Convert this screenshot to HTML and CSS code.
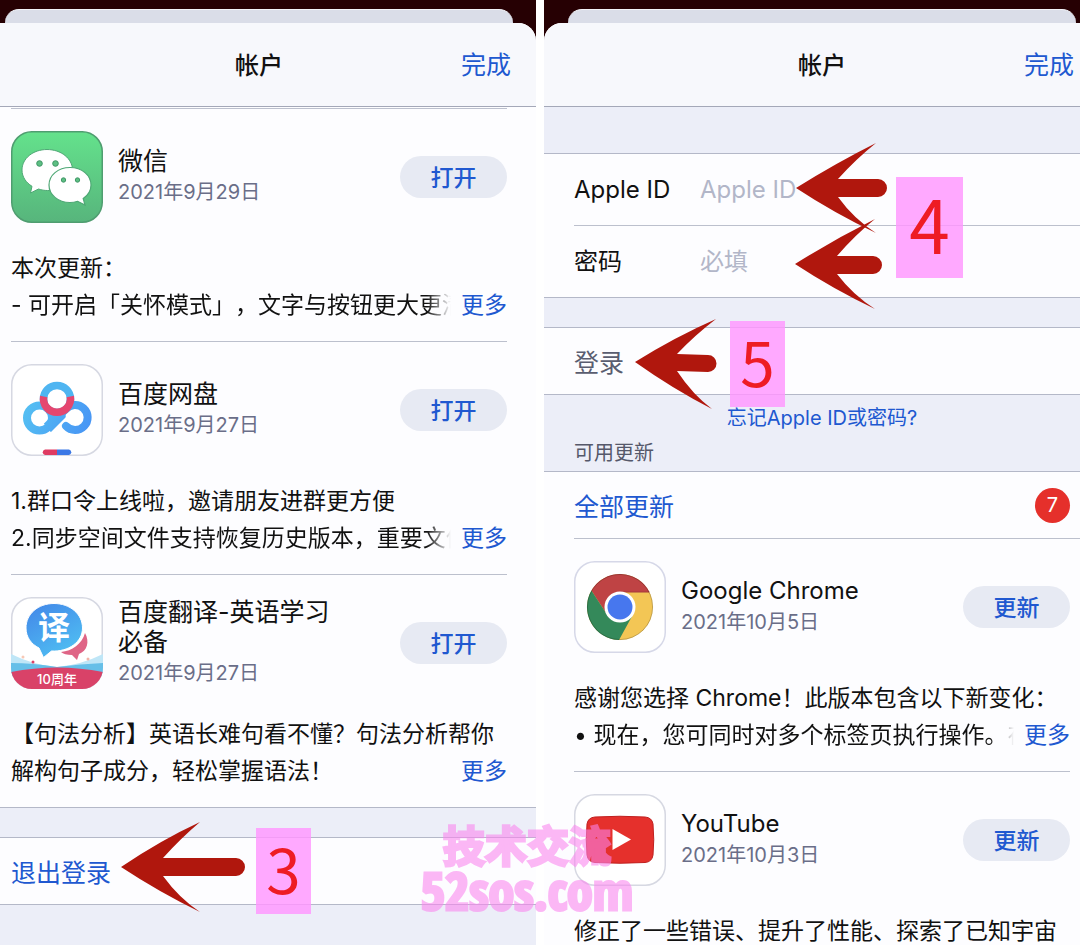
FILE: index.html
```html
<!DOCTYPE html>
<html lang="zh-CN">
<head>
    <meta charset="UTF-8">
    <meta name="viewport" content="width=device-width, initial-scale=1.0">
    <title>帐户</title>
    <link rel="stylesheet" href="styles.css">
</head>
<body>
    <main class="steps">
        <section class="phone phone-left">
            <div class="back-sheet"></div>
            <div class="sheet">
                <header class="sheet-header">
                    <h1>帐户</h1>
                    <a class="done" href="#">完成</a>
                </header>

                <div class="app-list">
                    <article class="app">
                        <div class="app-top">
                            <svg class="app-icon" viewBox="0 0 92 92" aria-hidden="true">
                                <defs>
                                    <linearGradient id="wechatBg" x1="0" y1="0" x2="0" y2="1">
                                        <stop offset="0" stop-color="#64e28c"/>
                                        <stop offset="1" stop-color="#57b57c"/>
                                    </linearGradient>
                                </defs>
                                <rect x=".75" y=".75" width="90.5" height="90.5" rx="20" fill="url(#wechatBg)" stroke="#4f9d70" stroke-width="1.5"/>
                                <path d="M36 18.500c-14 0-25 9-25 20.500 0 7 4 12.500 10 16.300L19.500 62l8-4c3 1 6 1.500 9 1.500 14 0 25-9 25-20.500S50 18.500 36 18.500z" fill="#fff" stroke="#4fa875" stroke-width="1"/>
                                <path d="M59 36.500c-12 0-21 7.800-21 17.500s9 17.500 21 17.500c2.800 0 5.200-.4 7.600-1.200L74 74l-1.800-6.500c4.800-3.200 7.800-8 7.800-13.500 0-9.700-9-17.500-21-17.500z" fill="#fff" stroke="#4fa875" stroke-width="1.200"/>
                                <g fill="#5dbf83" stroke="#3f9665" stroke-width="1">
                                    <circle cx="28.500" cy="32.500" r="2.800"/>
                                    <circle cx="44.500" cy="32.500" r="2.800"/>
                                    <circle cx="52.500" cy="49" r="2.200"/>
                                    <circle cx="66.500" cy="49" r="2.200"/>
                                </g>
                            </svg>
                            <div class="app-info">
                                <h2>微信</h2>
                                <p>2021年9月29日</p>
                            </div>
                            <button class="pill" type="button">打开</button>
                        </div>
                        <div class="notes">
                            <p>本次更新：</p>
                            <div class="notes-last">
                                <p class="fade">- 可开启「关怀模式」，文字与按钮更大更清</p>
                                <a href="#">更多</a>
                            </div>
                        </div>
                    </article>

                    <article class="app">
                        <div class="app-top">
                            <svg class="app-icon" viewBox="0 0 92 92" aria-hidden="true">
                                <defs>
                                    <linearGradient id="panBlue" gradientUnits="userSpaceOnUse" x1="12" y1="40" x2="80" y2="70">
                                        <stop offset="0" stop-color="#55c1f2"/>
                                        <stop offset="1" stop-color="#4793f5"/>
                                    </linearGradient>
                                </defs>
                                <rect x=".75" y=".75" width="90.500" height="90.500" rx="20" fill="#fff" stroke="#d6d8e2" stroke-width="1.500"/>
                                <path d="M28 38L46 52 64 38 58 50 40 68 34 64 43 54z" fill="url(#panBlue)"/>
                                <g fill="none" stroke="url(#panBlue)" stroke-width="8" stroke-linecap="round">
                                    <circle cx="28.500" cy="54" r="12.500" fill="#fff"/>
                                    <path d="M54.500 45.500A12.500 12.500 0 1 1 55 62" fill="#fff"/>
                                </g>
                                <path d="M36 63L55 44" stroke="url(#panBlue)" stroke-width="9"/>
                                <circle cx="46" cy="35" r="13.500" fill="#fff" stroke="#4fb5f1" stroke-width="7.500"/>
                                <path d="M32.700 32.500a13.500 13.500 0 1 0 26.600 0" fill="none" stroke="#e5466f" stroke-width="7.500"/>
                                <path d="M46 85.500H34a2.800 2.800 0 0 0 0 5.500h12z" fill="#df3b62"/>
                                <path d="M46 85.500h12a2.800 2.800 0 0 1 0 5.500H46z" fill="#3b78e6"/>
                            </svg>
                            <div class="app-info">
                                <h2>百度网盘</h2>
                                <p>2021年9月27日</p>
                            </div>
                            <button class="pill" type="button">打开</button>
                        </div>
                        <div class="notes">
                            <p>1.群口令上线啦，邀请朋友进群更方便</p>
                            <div class="notes-last">
                                <p class="fade">2.同步空间文件支持恢复历史版本，重要文件</p>
                                <a href="#">更多</a>
                            </div>
                        </div>
                    </article>

                    <article class="app">
                        <div class="app-top">
                            <svg class="app-icon" viewBox="0 0 92 92" aria-hidden="true">
                                <defs>
                                    <linearGradient id="fanyiBlue" x1="0" y1="0" x2=".6" y2="1">
                                        <stop offset="0" stop-color="#4285e8"/>
                                        <stop offset="1" stop-color="#4fbdf2"/>
                                    </linearGradient>
                                    <clipPath id="fanyiClip"><rect width="92" height="92" rx="21"/></clipPath>
                                </defs>
                                <rect x=".75" y=".75" width="90.500" height="90.500" rx="20" fill="#fff" stroke="#d6d8e2" stroke-width="1.500"/>
                                <g clip-path="url(#fanyiClip)">
                                    <path d="M0 57Q22 68 46 70 70 68 92 57V76H0z" fill="#bfe6f7"/>
                                    <path d="M0 66Q22 66 46 70 70 67 92 66V80H0z" fill="#66bfe8"/>
                                    <path d="M0 75Q46 66 92 75V92H0z" fill="#d94268"/>
                                </g>
                                <path d="M74 36c5 9 2 18-6 21l-2 6-5-5c-5 0-9-1-11-3 11-1 21-8 24-19z" fill="#df6586"/>
                                <path d="M43 6.500C27 6.500 15 17 15 31c0 9 5 16 13 20l4.500 9.500 8-6.500c17 1 31-9 31-23C71.500 17 59 6.500 43 6.500z" fill="url(#fanyiBlue)" stroke="#fff" stroke-width="1"/>
                                <circle cx="22" cy="65" r="1.500" fill="#d94268"/>
                                <circle cx="12" cy="60" r="1.500" fill="#f7c8b5"/>
                                <circle cx="77" cy="62" r="1.500" fill="#f3b3a8"/>
                                <text class="icon-word" x="43" y="42" text-anchor="middle">译</text>
                                <text class="icon-band" x="46" y="87" text-anchor="middle">10周年</text>
                            </svg>
                            <div class="app-info">
                                <h2>百度翻译-英语学习必备</h2>
                                <p>2021年9月27日</p>
                            </div>
                            <button class="pill" type="button">打开</button>
                        </div>
                        <div class="notes">
                            <p>【句法分析】英语长难句看不懂？句法分析帮你</p>
                            <div class="notes-last">
                                <p>解构句子成分，轻松掌握语法！</p>
                                <a href="#">更多</a>
                            </div>
                        </div>
                    </article>
                </div>

                <div class="band band-small"></div>
                <button class="row row-blue" type="button">退出登录</button>
                <div class="band band-rest"></div>
            </div>

            <svg class="arrow arrow-logout" viewBox="0 0 125 90" aria-hidden="true">
                <path d="M0 45Q40 18 79 0Q60 16 42 36H115a9 9 0 0 1 0 18H42Q58 76 79 90Q38 70 0 45z"/>
            </svg>
            <span class="step step-3">3</span>
        </section>

        <section class="phone phone-right">
            <div class="back-sheet"></div>
            <div class="sheet">
                <header class="sheet-header">
                    <h1>帐户</h1>
                    <a class="done" href="#">完成</a>
                </header>

                <div class="band band-top"></div>
                <form class="login">
                    <div class="field">
                        <label for="appleId">Apple ID</label>
                        <input id="appleId" type="text" placeholder="Apple ID">
                    </div>
                    <div class="field">
                        <label for="password">密码</label>
                        <input id="password" type="password" placeholder="必填">
                    </div>
                </form>
                <div class="band band-small"></div>
                <button class="row row-grey" type="button">登录</button>
                <div class="band band-updates">
                    <a href="#">忘记Apple ID或密码?</a>
                    <h3>可用更新</h3>
                </div>
                <div class="update-all">
                    <button type="button">全部更新</button>
                    <span class="badge">7</span>
                </div>

                <div class="app-list">
                    <article class="app app-first">
                        <div class="app-top">
                            <svg class="app-icon" viewBox="0 0 92 92" aria-hidden="true">
                                <rect x=".75" y=".75" width="90.500" height="90.500" rx="20" fill="#fff" stroke="#d6d8e8" stroke-width="1.500"/>
                                <circle cx="46" cy="46" r="33" fill="#f3c655"/>
                                <path d="M46 31H75.400A33 33 0 0 0 17.400 29.500L33 53.500z" fill="#bf4344"/>
                                <path d="M17.400 29.500A33 33 0 0 0 45 79L59 53.500 33 53.500z" fill="#34895a"/>
                                <path d="M46 31L75.400 31" stroke="#a43a3c" stroke-width="1"/>
                                <circle cx="46" cy="46" r="32.600" fill="none" stroke="#000" stroke-opacity=".2" stroke-width="1"/>
                                <circle cx="46" cy="46" r="15.500" fill="#fff"/>
                                <circle cx="46" cy="46" r="12.500" fill="#4777ee"/>
                            </svg>
                            <div class="app-info">
                                <h2 class="latin">Google Chrome</h2>
                                <p>2021年10月5日</p>
                            </div>
                            <button class="pill" type="button">更新</button>
                        </div>
                        <div class="notes">
                            <p>感谢您选择 Chrome！此版本包含以下新变化：</p>
                            <div class="notes-last">
                                <p class="fade">• 现在，您可同时对多个标签页执行操作。在</p>
                                <a href="#">更多</a>
                            </div>
                        </div>
                    </article>

                    <article class="app">
                        <div class="app-top">
                            <svg class="app-icon" viewBox="0 0 92 92" aria-hidden="true">
                                <rect x=".75" y=".75" width="90.500" height="90.500" rx="20" fill="#fff" stroke="#d6d8e2" stroke-width="1.500"/>
                                <path d="M21 23Q46 21.500 71 23 78 23.500 79 30 80.500 46 79 61 78 68 71 68.500 46 70 21 68.500 14 68 13 61 11.500 46 13 30 14 23.500 21 23z" fill="#e5302c" stroke="#c0201f" stroke-width="1"/>
                                <path d="M38.500 35L57 45.500 38.500 56z" fill="#fff"/>
                            </svg>
                            <div class="app-info">
                                <h2 class="latin">YouTube</h2>
                                <p>2021年10月3日</p>
                            </div>
                            <button class="pill" type="button">更新</button>
                        </div>
                        <div class="notes">
                            <p>修正了一些错误、提升了性能、探索了已知宇宙</p>
                        </div>
                    </article>
                </div>
            </div>

            <svg class="arrow arrow-id" viewBox="0 0 91 90" aria-hidden="true">
                <path d="M0 45Q40 20 80 0Q60 16 42 36H82a9 9 0 0 1 0 18H42Q58 76 80 90Q38 70 0 45z"/>
            </svg>
            <svg class="arrow arrow-password" viewBox="0 0 91 90" aria-hidden="true">
                <path d="M0 45Q40 20 80 0Q60 16 42 37H78a9 9 0 0 1 0 18H42Q58 76 80 90Q38 70 0 45z"/>
            </svg>
            <svg class="arrow arrow-login" viewBox="0 0 91 90" aria-hidden="true">
                <path d="M0 43Q40 18 81 0Q60 16 42 35L73 36a8 8 0 0 1 0 17L42 52Q58 76 77 90Q38 70 0 43z"/>
            </svg>
            <span class="step step-4">4</span>
            <span class="step step-5">5</span>
        </section>

        <div class="watermark">
            <span class="watermark-name">技术交流</span>
            <span class="watermark-site">52sos.com</span>
        </div>
    </main>
</body>
</html>
```

FILE: styles.css
```css
* {
    box-sizing: border-box;
}

body {
    margin: 0;
    font-family: Inter, "Noto Sans CJK SC", sans-serif;
    text-spacing-trim: space-all;
    color: #111;
    background-color: #fff;
}

h1, h2, h3, p {
    margin: 0;
    font-weight: normal;
}

a {
    color: #2058d0;
    text-decoration: none;
}

button {
    font-family: inherit;
    border: none;
    cursor: pointer;
}

.steps {
    position: relative;
    display: grid;
    grid-template-columns: 1fr 1fr;
    gap: 8px;
    height: 100vh;
    overflow: hidden;
}

/* Phones: the left one is cut off on the right side, the right one on the left */
.phone {
    position: relative;
    display: flex;
    flex-direction: column;
    min-width: 0;
    padding-top: 9px;
    background: linear-gradient(#260003 60px, #fdfdff 60px);
}

.phone-left {
    --left: 11px;
    --right: 29px;
}

.phone-right {
    --left: 30px;
    --right: 10px;
}

.back-sheet {
    height: 14px;
    flex-shrink: 0;
    border-top: 1px solid #f2f3f8;
    border-radius: 14px 14px 0 0;
    background-color: #dadde8;
}

.phone-left .back-sheet {
    margin: 0 23px 0 5px;
}

.phone-right .back-sheet {
    margin: 0 4px 0 24px;
}

.sheet {
    display: flex;
    flex-direction: column;
    flex: 1;
    background-color: #fdfdff;
}

.phone-left .sheet {
    border-top-right-radius: 18px;
}

.phone-right .sheet {
    border-top-left-radius: 18px;
}

.sheet-header {
    display: grid;
    grid-template-columns: 1fr auto 1fr;
    align-items: center;
    height: 84px;
    flex-shrink: 0;
    padding: 0 25px 3px 7px;
    border-bottom: 1px solid #a4a8b8;
    border-radius: inherit;
    background-color: #f7f8fc;
}

.phone-right .sheet-header {
    padding: 0 6px 3px 26px;
}

.sheet-header h1 {
    grid-column: 2;
    font-size: 24px;
    font-weight: 500;
}

.done {
    justify-self: end;
    font-size: 25px;
}

/* App list */
.app-list {
    padding: 1px var(--right) 0 var(--left);
}

.phone-right .app-list {
    padding-top: 0;
}

.app {
    padding: 22px 0 17px;
    border-top: 1px solid #bcc0cd;
}

.app-first {
    border-top: none;
}

.app-top {
    display: flex;
    align-items: center;
    height: 92px;
    margin-bottom: 27px;
}

.app-icon {
    width: 92px;
    height: 92px;
    flex-shrink: 0;
}

.icon-word {
    font-size: 32px;
    font-weight: bold;
    fill: #fff;
}

.icon-band {
    font-size: 13px;
    font-weight: 500;
    fill: #fff;
}

.app-info {
    flex: 1;
    padding: 0 48px 0 15px;
}

.app-info h2 {
    font-size: 25px;
    line-height: 30px;
}

.app-info .latin {
    font-size: 24px;
}

.app-info p {
    font-size: 20px;
    line-height: 32px;
    color: #6a6e88;
}

.pill {
    width: 107px;
    height: 42px;
    padding: 0 0 2px;
    border-radius: 21px;
    background-color: #e7eaf3;
    color: #2058d0;
    font-size: 23px;
    font-weight: 500;
}

.notes {
    font-size: 23px;
    line-height: 37px;
    white-space: nowrap;
}

.notes-last {
    display: flex;
    justify-content: space-between;
    gap: 10px;
}

.notes-last p {
    min-width: 0;
    overflow: hidden;
}

.fade {
    -webkit-mask-image: linear-gradient(to right, #000 calc(100% - 24px), transparent);
    mask-image: linear-gradient(to right, #000 calc(100% - 24px), transparent);
}

/* Grey bands between the groups */
.band {
    flex-shrink: 0;
    border-top: 1px solid #b4b8c8;
    border-bottom: 1px solid #b4b8c8;
    background-color: #eceef8;
}

.band-small {
    height: 31px;
}

.band-top {
    height: 47px;
    border-top: none;
}

.band-rest {
    flex: 1;
    border-bottom: none;
}

.band-updates {
    display: flex;
    flex-direction: column;
    height: 78px;
    padding: 8px var(--right) 0 var(--left);
    font-size: 20px;
    line-height: 30px;
}

.band-updates a {
    align-self: center;
}

.band-updates h3 {
    margin-top: 5px;
    font-size: 20px;
    color: #55586a;
}

.row {
    height: 66px;
    flex-shrink: 0;
    padding: 0 var(--right) 0 var(--left);
    background-color: transparent;
    font-size: 25px;
    text-align: left;
}

.row-blue {
    color: #2058d0;
}

.row-grey {
    color: #5a5d70;
}

.field {
    display: flex;
    align-items: center;
    box-sizing: content-box;
    height: 71px;
    margin-left: var(--left);
}

.field + .field {
    border-top: 1px solid #bcc0cd;
}

.field label {
    width: 126px;
    flex-shrink: 0;
}

.field label,
.field input {
    font-size: 24px;
    line-height: 36px;
}

.field input {
    flex: 1;
    min-width: 0;
    padding: 0;
    border: none;
    outline: none;
    background: none;
    font-family: inherit;
}

.field input::placeholder {
    color: #b2b6c8;
}

.update-all {
    display: flex;
    align-items: center;
    justify-content: space-between;
    height: 67px;
    flex-shrink: 0;
    margin-left: var(--left);
    padding-right: var(--right);
    border-bottom: 1px solid #bcc0cd;
}

.update-all button {
    padding: 0;
    background: none;
    color: #2058d0;
    font-size: 25px;
}

.badge {
    width: 35px;
    height: 35px;
    border-radius: 50%;
    background-color: #e5302b;
    color: #fff;
    font-size: 20px;
    line-height: 35px;
    text-align: center;
}

/* Red arrows and step numbers drawn over the screens */
.arrow {
    position: absolute;
    width: 91px;
    height: 90px;
    fill: #b0170d;
}

.arrow-logout {
    left: 121px;
    top: 822px;
    width: 125px;
}

.arrow-id {
    left: 252px;
    top: 143px;
}

.arrow-password {
    left: 251px;
    top: 219px;
}

.arrow-login {
    left: 91px;
    top: 319px;
}

.step {
    position: absolute;
    width: 55px;
    height: 86px;
    background-color: rgba(255, 150, 255, 0.82);
    color: #ee1c24;
    font-family: "Noto Sans CJK SC", sans-serif;
    font-size: 62px;
    line-height: 78px;
    text-align: center;
}

.step-3 {
    left: 256px;
    top: 828px;
}

.step-4 {
    left: 352px;
    top: 177px;
    width: 67px;
    height: 101px;
    font-size: 73px;
    line-height: 90px;
}

.step-5 {
    left: 186px;
    top: 321px;
}

.watermark {
    position: absolute;
    left: 421px;
    top: 823px;
    display: flex;
    flex-direction: column;
    align-items: center;
    color: #fa85ef;
    opacity: 0.58;
    font-weight: bold;
    white-space: nowrap;
    -webkit-text-stroke: 3px #fa85ef;
}

.watermark-name {
    font-size: 42px;
    line-height: 48px;
}

.watermark-site {
    font-family: "Liberation Sans Narrow", "Open Sans Condensed", "Liberation Sans", sans-serif;
    font-size: 52px;
    line-height: 38px;
}
```
